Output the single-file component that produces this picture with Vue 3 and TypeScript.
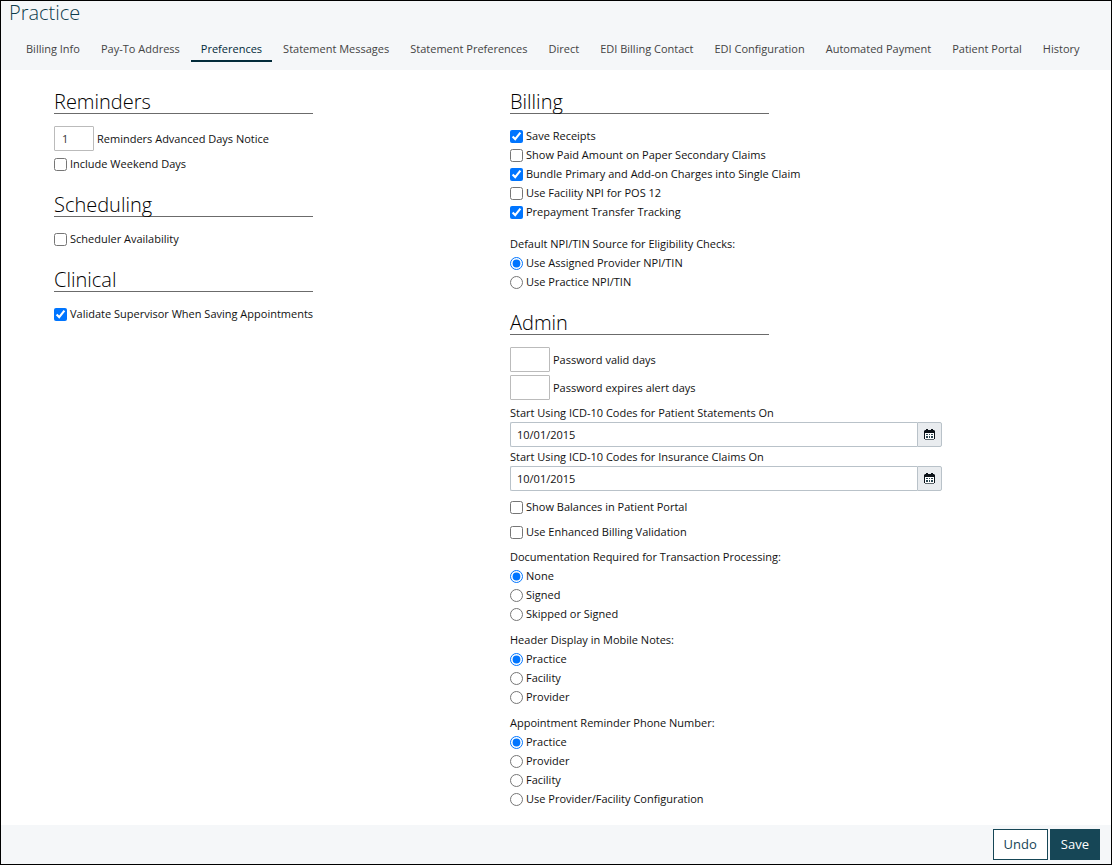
<script setup lang="ts">
import { reactive, ref } from 'vue'

interface CheckOption {
  id: string
  label: string
  checked: boolean
}

interface RadioGroup {
  name: string
  legend: string
  options: string[]
  selected: string
}

interface DateField {
  id: string
  label: string
  value: string
}

const tabs: string[] = [
  'Billing Info',
  'Pay-To Address',
  'Preferences',
  'Statement Messages',
  'Statement Preferences',
  'Direct',
  'EDI Billing Contact',
  'EDI Configuration',
  'Automated Payment',
  'Patient Portal',
  'History',
]
const activeTab = ref('Preferences')

const reminderDays = ref('1')
const includeWeekends = ref(false)
const schedulerAvailability = ref(false)
const validateSupervisor = ref(true)

const billingOptions = reactive<CheckOption[]>([
  { id: 'save-receipts', label: 'Save Receipts', checked: true },
  { id: 'show-paid', label: 'Show Paid Amount on Paper Secondary Claims', checked: false },
  { id: 'bundle', label: 'Bundle Primary and Add-on Charges into Single Claim', checked: true },
  { id: 'facility-npi', label: 'Use Facility NPI for POS 12', checked: false },
  { id: 'prepayment', label: 'Prepayment Transfer Tracking', checked: true },
])

const eligibility = reactive<RadioGroup>({
  name: 'eligibility',
  legend: 'Default NPI/TIN Source for Eligibility Checks:',
  options: ['Use Assigned Provider NPI/TIN', 'Use Practice NPI/TIN'],
  selected: 'Use Assigned Provider NPI/TIN',
})

const passwordValid = ref('')
const passwordAlert = ref('')

const dateFields = reactive<DateField[]>([
  { id: 'icd-statements', label: 'Start Using ICD-10 Codes for Patient Statements On', value: '10/01/2015' },
  { id: 'icd-claims', label: 'Start Using ICD-10 Codes for Insurance Claims On', value: '10/01/2015' },
])

const adminOptions = reactive<CheckOption[]>([
  { id: 'show-balances', label: 'Show Balances in Patient Portal', checked: false },
  { id: 'enhanced-validation', label: 'Use Enhanced Billing Validation', checked: false },
])

const adminGroups = reactive<RadioGroup[]>([
  {
    name: 'documentation',
    legend: 'Documentation Required for Transaction Processing:',
    options: ['None', 'Signed', 'Skipped or Signed'],
    selected: 'None',
  },
  {
    name: 'header-display',
    legend: 'Header Display in Mobile Notes:',
    options: ['Practice', 'Facility', 'Provider'],
    selected: 'Practice',
  },
  {
    name: 'reminder-phone',
    legend: 'Appointment Reminder Phone Number:',
    options: ['Practice', 'Provider', 'Facility', 'Use Provider/Facility Configuration'],
    selected: 'Practice',
  },
])
</script>

<template>
  <div class="page">
    <header class="header">
      <h1 class="title">Practice</h1>
      <nav class="tabs" aria-label="Practice sections">
        <a
          v-for="tab in tabs"
          :key="tab"
          href="#"
          class="tab"
          :class="{ active: tab === activeTab }"
          @click.prevent="activeTab = tab"
          >{{ tab }}</a
        >
      </nav>
    </header>

    <main class="content">
      <div class="column">
        <section>
          <h2 class="heading">Reminders</h2>
          <div class="numbers">
            <label class="number"><input v-model="reminderDays" class="box" type="text" />Reminders Advanced Days Notice</label>
          </div>
          <label class="option"><input v-model="includeWeekends" type="checkbox" />Include Weekend Days</label>
        </section>
        <section>
          <h2 class="heading">Scheduling</h2>
          <div class="options">
            <label class="option"><input v-model="schedulerAvailability" type="checkbox" />Scheduler Availability</label>
          </div>
        </section>
        <section>
          <h2 class="heading">Clinical</h2>
          <div class="options">
            <label class="option"><input v-model="validateSupervisor" type="checkbox" />Validate Supervisor When Saving Appointments</label>
          </div>
        </section>
      </div>

      <div class="column">
        <section>
          <h2 class="heading">Billing</h2>
          <div class="options">
            <label v-for="item in billingOptions" :key="item.id" class="option"
              ><input v-model="item.checked" type="checkbox" />{{ item.label }}</label
            >
          </div>
          <fieldset class="group spaced">
            <legend>{{ eligibility.legend }}</legend>
            <label v-for="option in eligibility.options" :key="option" class="option"
              ><input v-model="eligibility.selected" type="radio" :name="eligibility.name" :value="option" />{{ option }}</label
            >
          </fieldset>
        </section>

        <section>
          <h2 class="heading">Admin</h2>
          <div class="numbers">
            <label class="number"><input v-model="passwordValid" class="box" type="text" />Password valid days</label>
            <label class="number"><input v-model="passwordAlert" class="box" type="text" />Password expires alert days</label>
          </div>
          <div v-for="field in dateFields" :key="field.id" class="date">
            <label :for="field.id">{{ field.label }}</label>
            <div class="date-control">
              <input :id="field.id" v-model="field.value" type="text" />
              <button type="button" aria-label="Open calendar">
                <svg width="11" height="11" viewBox="0 0 11 11" aria-hidden="true">
                  <path fill="#0c1218" d="M2 0h2v1h3V0h2v1h1l1 1v2H0V2l1-1h1z" />
                  <path fill="#0c1218" d="M0 4h1v6H0zM10 4h1v6h-1z" />
                  <path fill="#5c656b" d="M1 10h9v1H1z" />
                  <path fill="#fff" d="M1 4h9v6H1z" />
                  <path fill="#2c4650" d="M2 5h2v1H2zM5 5h1v1H5zM7 5h2v1H7zM2 7h2v2H2zM5 7h1v2H5zM7 7h2v2H7z" />
                </svg>
              </button>
            </div>
          </div>
          <div class="stack">
            <label v-for="item in adminOptions" :key="item.id" class="option"
              ><input v-model="item.checked" type="checkbox" />{{ item.label }}</label
            >
            <fieldset v-for="group in adminGroups" :key="group.name" class="group">
              <legend>{{ group.legend }}</legend>
              <label v-for="option in group.options" :key="option" class="option"
                ><input v-model="group.selected" type="radio" :name="group.name" :value="option" />{{ option }}</label
              >
            </fieldset>
          </div>
        </section>
      </div>
    </main>

    <footer class="footer">
      <button type="button" class="button">Undo</button>
      <button type="button" class="button primary">Save</button>
    </footer>
  </div>
</template>

<style>
body {
  margin: 0;
}
</style>

<style scoped>
.page,
.page * {
  box-sizing: border-box;
}

.page {
  display: flex;
  flex-direction: column;
  min-height: 100vh;
  border: 1px solid #000;
  background: #fff;
  color: #111;
  font-family: 'Open Sans', 'Noto Sans', sans-serif;
  font-size: 11px;
  line-height: 19px;
}

.header {
  padding-bottom: 8px;
  background: #f5f7f9;
}

.title {
  margin: 0;
  padding-left: 8px;
  color: #0e3c4c;
  font-size: 20px;
  font-weight: 300;
  line-height: 24px;
}

.tabs {
  display: flex;
  gap: 1px;
  padding: 11px 15px 0;
}

.tab {
  padding: 3px 10px 2px;
  border-bottom: 2px solid transparent;
  color: #444;
  line-height: 19px;
  text-decoration: none;
  white-space: nowrap;
}

.tab.active {
  border-color: #022b3a;
  color: #022b3a;
}

.content {
  display: grid;
  flex: 1;
  grid-template-columns: 432fr 432fr 116fr;
  column-gap: 24px;
  padding: 1px 29px 16px 53px;
}

.heading {
  width: 60%;
  margin: 0;
  padding-top: 20px;
  border-bottom: 1px solid #6b6b6b;
  color: #000;
  font-size: 20px;
  font-weight: 300;
  line-height: 22px;
}

.options {
  padding-top: 13px;
}

.option {
  display: flex;
  width: fit-content;
  padding-bottom: 2px;
  line-height: 17px;
}

.option input {
  width: 13px;
  height: 13px;
  margin: 3px 3px 0 0;
}

.numbers {
  display: grid;
  gap: 3px;
  padding: 12px 0 3px;
}

.numbers + .option {
  margin-top: 1px;
}

.number {
  display: flex;
  align-items: center;
  gap: 3px;
}

.box {
  width: 40px;
  height: 25px;
  padding: 0 7px;
  border: 1px solid #bbb;
  border-radius: 1px;
  background: #fff;
  color: #333;
  font: inherit;
}

.group {
  min-width: 0;
  margin: 0;
  padding: 0;
  border: 0;
}

.group legend {
  padding: 0 0 2px;
  line-height: 17px;
}

.spaced {
  margin-top: 13px;
}

.date label {
  display: block;
}

.date-control {
  display: flex;
  height: 25px;
}

.date-control input {
  flex: 1;
  min-width: 0;
  padding: 0 6px;
  border: 1px solid #b9c2c9;
  border-right: 0;
  border-radius: 2px 0 0 2px;
  background: #fff;
  color: #111;
  font: inherit;
}

.date-control button {
  display: flex;
  align-items: center;
  justify-content: center;
  width: 25px;
  padding: 0;
  border: 1px solid #b9c2c9;
  border-radius: 0 2px 2px 0;
  background: #e9ecef;
}

.stack {
  display: grid;
  gap: 6px;
  padding-top: 7px;
}

.group + .group {
  margin-top: 1px;
}

.footer {
  display: flex;
  justify-content: flex-end;
  gap: 2px;
  padding: 4px 11px;
  background: #f5f7f9;
}

.button {
  height: 31px;
  padding: 0 10px 2px;
  border: 1px solid #164656;
  background: #fff;
  color: #164656;
  font-family: inherit;
  font-size: 13px;
}

.primary {
  background: #164656;
  color: #fff;
}
</style>
